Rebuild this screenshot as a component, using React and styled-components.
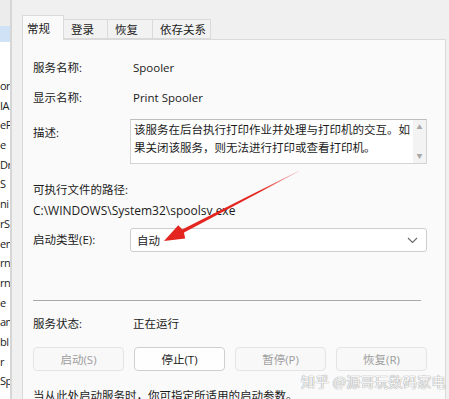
import React from "react";
import styled, { createGlobalStyle } from "styled-components";

const Global = createGlobalStyle`
  html, body { margin: 0; padding: 0; }
  body {
    background: #f0f0f0;
    overflow: hidden;
    font-family: "Open Sans", "Noto Sans CJK SC", sans-serif;
    color: #1b1b1b;
  }
`;

const Screen = styled.div`
  position: relative;
  width: 449px;
  height: 399px;
  display: flex;
  overflow: hidden;
  background: #f0f0f0;
`;

const SideList = styled.div`
  width: 10px;
  flex: none;
  background: #fff;
  border-right: 2px solid #d6d6d6;
  overflow: hidden;
  display: flex;
  flex-direction: column;
`;

const SideHead = styled.div`
  height: 26px;
  background: #ececec;
  flex: none;
`;

const SideSelected = styled.div`
  height: 16px;
  background: #cfe2f6;
  flex: none;
`;

const SideSpacer = styled.div`
  height: 34px;
  flex: none;
`;

const SideRow = styled.div`
  height: 19.7px;
  line-height: 19.7px;
  font-size: 11px;
  letter-spacing: -0.5px;
  white-space: nowrap;
  color: #222;
  flex: none;
`;

const Dialog = styled.div`
  flex: 1;
  display: flex;
  flex-direction: column;
  padding: 15px 3px 0 10px;
`;

const TabBar = styled.div`
  display: flex;
  align-items: flex-start;
  height: 24px;
  position: relative;
  z-index: 1;
`;

const Tab = styled.div`
  box-sizing: border-box;
  width: ${(p) => p.$w}px;
  height: ${(p) => (p.$active ? 25 : 20)}px;
  margin-top: ${(p) => (p.$active ? 0 : 4)}px;
  padding-left: ${(p) => (p.$active ? 4 : 7)}px;
  font-size: 11.5px;
  line-height: ${(p) => (p.$active ? 26 : 19)}px;
  background: ${(p) => (p.$active ? "#fafafa" : "#f2f2f2")};
  border: 1px solid #dadada;
  border-bottom: ${(p) => (p.$active ? "none" : "1px solid #dadada")};
  margin-left: ${(p) => (p.$active ? 0 : -1)}px;
  color: #1b1b1b;
  white-space: nowrap;
`;

const Panel = styled.div`
  flex: 1;
  background: #fafafa;
  border: 1px solid #dadada;
  border-bottom: none;
  padding: 20px 0 0 10px;
  display: flex;
  flex-direction: column;
  font-size: 11.5px;
`;

const Row = styled.div`
  display: flex;
  align-items: ${(p) => (p.$top ? "flex-start" : "center")};
  height: ${(p) => p.$h}px;
  margin-bottom: ${(p) => p.$mb || 0}px;
  margin-top: ${(p) => p.$mt || 0}px;
`;

const Label = styled.div`
  width: 97px;
  flex: none;
  line-height: 16px;
  padding-top: ${(p) => p.$pt || 0}px;
  white-space: nowrap;
`;

const Value = styled.div`
  padding-left: 3px;
  line-height: 16px;
  white-space: nowrap;
`;

const DescBox = styled.div`
  box-sizing: border-box;
  width: 297px;
  height: 45px;
  background: #fff;
  border: 1px solid #d4d4d4;
  border-top-color: #bdbdbd;
  display: flex;
`;

const DescText = styled.div`
  flex: 1;
  padding: 1px 2px 0 3px;
  line-height: 18px;
  font-size: 11.5px;
  overflow: hidden;
`;

const ScrollBar = styled.div`
  width: 13px;
  flex: none;
  background: #f3f3f3;
  display: flex;
  flex-direction: column;
  justify-content: space-between;
  align-items: center;
  padding: 3px 0;
  font-size: 6px;
  color: #a8a8a8;
  line-height: 8px;
`;

const PathText = styled.div`
  line-height: 16px;
  font-size: 12px;
  white-space: nowrap;
`;

const Select = styled.div`
  box-sizing: border-box;
  width: 297px;
  height: 24px;
  background: #fff;
  border: 1px solid #cdcdcd;
  border-radius: 3px;
  display: flex;
  align-items: center;
  justify-content: space-between;
  padding: 0 8px 0 6px;
`;

const Divider = styled.div`
  width: 388px;
  height: 1px;
  background: #a9a9a9;
`;

const ButtonRow = styled.div`
  display: flex;
  gap: 10px;
  height: 24px;
`;

const Button = styled.div`
  box-sizing: border-box;
  width: 91px;
  height: 24px;
  border-radius: 4px;
  border: 1px solid ${(p) => (p.$disabled ? "#e4e4e4" : "#cfcfcf")};
  background: ${(p) => (p.$disabled ? "#f8f8f8" : "#fefefe")};
  color: ${(p) => (p.$disabled ? "#9d9d9d" : "#1b1b1b")};
  display: flex;
  align-items: center;
  justify-content: center;
  font-size: 11.5px;
`;

const Footer = styled.div`
  margin-top: 17px;
  line-height: 16px;
  white-space: nowrap;
`;

const Overlay = styled.svg`
  position: absolute;
  left: 0;
  top: 0;
  pointer-events: none;
`;

const Watermark = styled.div`
  position: absolute;
  left: 301px;
  top: 371px;
  font-size: 14px;
  letter-spacing: 0.2px;
  font-family: "Noto Sans CJK SC", sans-serif;
  color: rgba(255, 255, 255, 0.92);
  text-shadow: 0 0 1px #9a9a9a, 0 0 1px #9a9a9a;
  white-space: nowrap;
`;

const sideItems = ["or", "IA", "eP", "e", "Dr", "S", "ni", "rS", "en", "rn", "rn", "e", "an", "bl", "r", "Sp"];

export default function App() {
  const tip = [164, 241];
  const tail = [299, 171];
  const dx = tail[0] - tip[0];
  const dy = tail[1] - tip[1];
  const len = Math.hypot(dx, dy);
  const ux = dx / len, uy = dy / len;
  const px = -uy, py = ux;
  const headLen = 20, headW = 7.5;
  const bx = tip[0] + ux * headLen, by = tip[1] + uy * headLen;
  const shaftStartW = 1.8;
  const shaft = [
    [bx - ux * 2 + px * shaftStartW, by - uy * 2 + py * shaftStartW],
    [tail[0] + px * 0.3, tail[1] + py * 0.3],
    [tail[0] - px * 0.3, tail[1] - py * 0.3],
    [bx - ux * 2 - px * shaftStartW, by - uy * 2 - py * shaftStartW],
  ];
  const head = [
    tip,
    [bx + px * headW, by + py * headW],
    [bx + ux * 2, by + uy * 2],
    [bx - px * headW, by - py * headW],
  ];
  const pts = (a) => a.map((p) => p.join(",")).join(" ");

  return (
    <Screen>
      <Global />
      <SideList>
        <SideHead />
        <SideSelected />
        <SideSpacer />
        {sideItems.map((s, i) => (
          <SideRow key={i}>{s}</SideRow>
        ))}
      </SideList>
      <Dialog>
        <TabBar>
          <Tab $active $w={42}>常规</Tab>
          <Tab $w={45}>登录</Tab>
          <Tab $w={46}>恢复</Tab>
          <Tab $w={59}>依存关系</Tab>
        </TabBar>
        <Panel>
          <Row $h={16} $mb={14}>
            <Label>服务名称:</Label>
            <Value>Spooler</Value>
          </Row>
          <Row $h={16} $mb={14}>
            <Label>显示名称:</Label>
            <Value>Print Spooler</Value>
          </Row>
          <Row $top $h={45} $mb={18} $mt={-1}>
            <Label $pt={6}>描述:</Label>
            <DescBox>
              <DescText>
                该服务在后台执行打印作业并处理与打印机的交互。如果关闭该服务，则无法进行打印或查看打印机。
              </DescText>
              <ScrollBar>
                <span>▲</span>
                <span>▼</span>
              </ScrollBar>
            </DescBox>
          </Row>
          <Row $h={16} $mb={5}>
            <Label>可执行文件的路径:</Label>
          </Row>
          <Row $h={16} $mb={9}>
            <PathText>C:\WINDOWS\System32\spoolsv.exe</PathText>
          </Row>
          <Row $h={24} $mb={48}>
            <Label>启动类型(E):</Label>
            <Select>
              <span>自动</span>
              <svg width="11" height="7" viewBox="0 0 11 7">
                <path d="M1 1 L5.5 5.5 L10 1" fill="none" stroke="#6a6a6a" strokeWidth="1.1" />
              </svg>
            </Select>
          </Row>
          <Divider />
          <Row $h={16} $mt={15} $mb={15}>
            <Label>服务状态:</Label>
            <Value>正在运行</Value>
          </Row>
          <ButtonRow>
            <Button $disabled>启动(S)</Button>
            <Button>停止(T)</Button>
            <Button $disabled>暂停(P)</Button>
            <Button $disabled>恢复(R)</Button>
          </ButtonRow>
          <Footer>当从此处启动服务时，你可指定所适用的启动参数。</Footer>
        </Panel>
      </Dialog>
      <Overlay width="449" height="399" viewBox="0 0 449 399">
        <defs>
          <linearGradient id="fade" x1={tip[0]} y1={tip[1]} x2={tail[0]} y2={tail[1]} gradientUnits="userSpaceOnUse">
            <stop offset="0" stopColor="#e3241f" />
            <stop offset="0.7" stopColor="#e3241f" />
            <stop offset="1" stopColor="#e3241f" stopOpacity="0.2" />
          </linearGradient>
        </defs>
        <polygon points={pts(shaft)} fill="url(#fade)" />
        <polygon points={pts(head)} fill="#e3241f" />
      </Overlay>
      <Watermark>知乎 @源哥玩数码家电</Watermark>
    </Screen>
  );
}
